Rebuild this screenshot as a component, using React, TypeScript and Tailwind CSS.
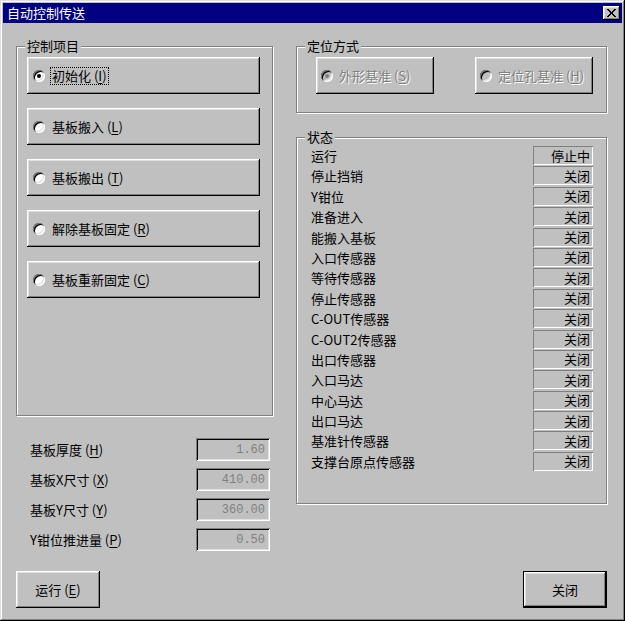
import React from "react";

const FONT = "font-['Noto_Sans_CJK_SC','Noto_Sans',sans-serif]";
const RAISED =
  "[box-shadow:inset_-1px_-1px_0_#000,inset_1px_1px_0_#fff,inset_-2px_-2px_0_#808080,inset_2px_2px_0_#dfdfdf]";
const ETCHED = "border border-[#808080] [box-shadow:1px_1px_0_#fff,inset_1px_1px_0_#fff]";
const SUNKEN_EDIT =
  "[box-shadow:inset_1px_1px_0_#808080,inset_-1px_-1px_0_#fff,inset_2px_2px_0_#000,inset_-2px_-2px_0_#dfdfdf]";
const SUNKEN_STATIC = "[box-shadow:inset_1px_1px_0_#808080,inset_-1px_-1px_0_#fff]";
const DISABLED_TEXT = "text-[#808080] [text-shadow:1px_1px_0_#fff]";

function Radio({ checked = false, disabled = false }: { checked?: boolean; disabled?: boolean }) {
  return (
    <span
      className={`relative flex h-[12px] w-[12px] shrink-0 items-center justify-center rounded-full ${
        disabled ? "bg-[#c0c0c0]" : "bg-white"
      } [box-shadow:inset_1px_1px_0_#808080,inset_-1px_-1px_0_#fff,inset_2px_2px_0_#000,inset_-2px_-2px_0_#dfdfdf]`}
    >
      {checked && (
        <span className={`h-[4px] w-[4px] rounded-full ${disabled ? "bg-[#808080]" : "bg-black"}`} />
      )}
    </span>
  );
}

function Mn({ pre, key_, post = ")" }: { pre: string; key_: string; post?: string }) {
  return (
    <>
      {pre}
      <span className="underline underline-offset-2">{key_}</span>
      {post}
    </>
  );
}

function Group({
  title,
  className,
  children,
}: {
  title: string;
  className: string;
  children: React.ReactNode;
}) {
  return (
    <div className={`relative ${ETCHED} ${className}`}>
      <span className="absolute -top-[8px] left-[8px] bg-[#c0c0c0] px-[2px] text-[13px] leading-[14px] text-black">
        {title}
      </span>
      {children}
    </div>
  );
}

const CONTROL_ITEMS = [
  { pre: "初始化 (", k: "I" },
  { pre: "基板搬入 (", k: "L" },
  { pre: "基板搬出 (", k: "T" },
  { pre: "解除基板固定 (", k: "R" },
  { pre: "基板重新固定 (", k: "C" },
];

const FIELDS = [
  { pre: "基板厚度 (", k: "H", value: "1.60" },
  { pre: "基板X尺寸 (", k: "X", value: "410.00" },
  { pre: "基板Y尺寸 (", k: "Y", value: "360.00" },
  { pre: "Y钳位推进量 (", k: "P", value: "0.50" },
];

const STATUS = [
  ["运行", "停止中"],
  ["停止挡销", "关闭"],
  ["Y钳位", "关闭"],
  ["准备进入", "关闭"],
  ["能搬入基板", "关闭"],
  ["入口传感器", "关闭"],
  ["等待传感器", "关闭"],
  ["停止传感器", "关闭"],
  ["C-OUT传感器", "关闭"],
  ["C-OUT2传感器", "关闭"],
  ["出口传感器", "关闭"],
  ["入口马达", "关闭"],
  ["中心马达", "关闭"],
  ["出口马达", "关闭"],
  ["基准针传感器", "关闭"],
  ["支撑台原点传感器", "关闭"],
];

export default function App() {
  return (
    <div
      className={`${FONT} flex h-[621px] w-[625px] flex-col bg-[#c0c0c0] p-[3px] text-[13px] leading-[14px] text-black [box-shadow:inset_-1px_-1px_0_#000,inset_1px_1px_0_#dfdfdf,inset_-2px_-2px_0_#808080,inset_2px_2px_0_#fff]`}
    >
      {/* title bar */}
      <div className="flex h-[20px] items-center justify-between bg-[#000080] pl-[4px] pr-[2px]">
        <span className="text-[13px] text-white">自动控制传送</span>
        <span className={`flex h-[14px] w-[17px] items-center justify-center bg-[#c0c0c0] ${RAISED}`}>
          <svg width="9" height="8" viewBox="0 0 9 8" shapeRendering="crispEdges">
            <path d="M0 0h2v1h1v1h1v1h1V2h1V1h1V0h2v1H8v1H7v1H6v2h1v1h1v1h1v1H7V7H6V6H5V5H4v1H3v1H2v1H0V7h1V6h1V5h1V3H2V2H1V1H0z" fill="#000" />
          </svg>
        </span>
      </div>

      <div className="flex flex-1 pb-[10px] pl-[13px] pr-[15px]">
        {/* left column */}
        <div className="flex w-[257px] flex-col">
          <Group title="控制项目" className="mt-[23px] h-[370px] pl-[10px] pr-[12px] pt-[10px]">
            <div className="flex flex-col gap-[14px]">
              {CONTROL_ITEMS.map((it, i) => (
                <div
                  key={it.k}
                  className={`flex h-[37px] items-center gap-[5px] bg-[#c0c0c0] pl-[6px] ${RAISED}`}
                >
                  <Radio checked={i === 0} />
                  <span
                    className={`px-[1px] py-[1px] ${
                      i === 0 ? "border border-dotted border-black" : "border border-transparent"
                    }`}
                  >
                    <Mn pre={it.pre} key_={it.k} />
                  </span>
                </div>
              ))}
            </div>
          </Group>

          <div className="mt-[22px] flex flex-col gap-[7px] pr-[3px]">
            {FIELDS.map((f) => (
              <div key={f.k} className="flex h-[23px] items-center justify-between pl-[14px]">
                <span>
                  <Mn pre={f.pre} key_={f.k} />
                </span>
                <span
                  className={`flex h-[23px] w-[74px] items-center justify-end pr-[5px] font-['Liberation_Mono',monospace] text-[12px] text-[#808080] ${SUNKEN_EDIT}`}
                >
                  {f.value}
                </span>
              </div>
            ))}
          </div>

          <div
            className={`mt-auto flex h-[37px] w-[84px] items-center justify-center bg-[#c0c0c0] ${RAISED}`}
          >
            <Mn pre="运行 (" key_="E" />
          </div>
        </div>

        {/* right column */}
        <div className="ml-[23px] flex w-[311px] flex-col">
          <Group title="定位方式" className="mt-[23px] h-[67px] pl-[19px] pr-[13px] pt-[10px]">
            <div className="flex justify-between">
              {[
                { pre: "外形基准 (", k: "S", checked: true },
                { pre: "定位孔基准 (", k: "H", checked: false },
              ].map((b) => (
                <div
                  key={b.k}
                  className={`flex h-[37px] w-[118px] items-center gap-[6px] bg-[#c0c0c0] pl-[5px] ${RAISED}`}
                >
                  <Radio checked={b.checked} disabled />
                  <span className={DISABLED_TEXT}>
                    <Mn pre={b.pre} key_={b.k} />
                  </span>
                </div>
              ))}
            </div>
          </Group>

          <Group title="状态" className="mt-[24px] h-[367px] pl-[14px] pr-[13px] pt-[8px]">
            <div className="flex flex-col">
              {STATUS.map(([label, value]) => (
                <div key={label} className="flex h-[20.4px] items-start justify-between">
                  <span className="pt-[3px]">{label}</span>
                  <span
                    className={`flex h-[19px] w-[60px] items-center justify-end pr-[3px] ${SUNKEN_STATIC}`}
                  >
                    {value}
                  </span>
                </div>
              ))}
            </div>
          </Group>

          <div
            className={`mt-auto flex h-[37px] w-[84px] items-center justify-center self-end border border-black bg-[#c0c0c0] ${RAISED}`}
          >
            关闭
          </div>
        </div>
      </div>
    </div>
  );
}
